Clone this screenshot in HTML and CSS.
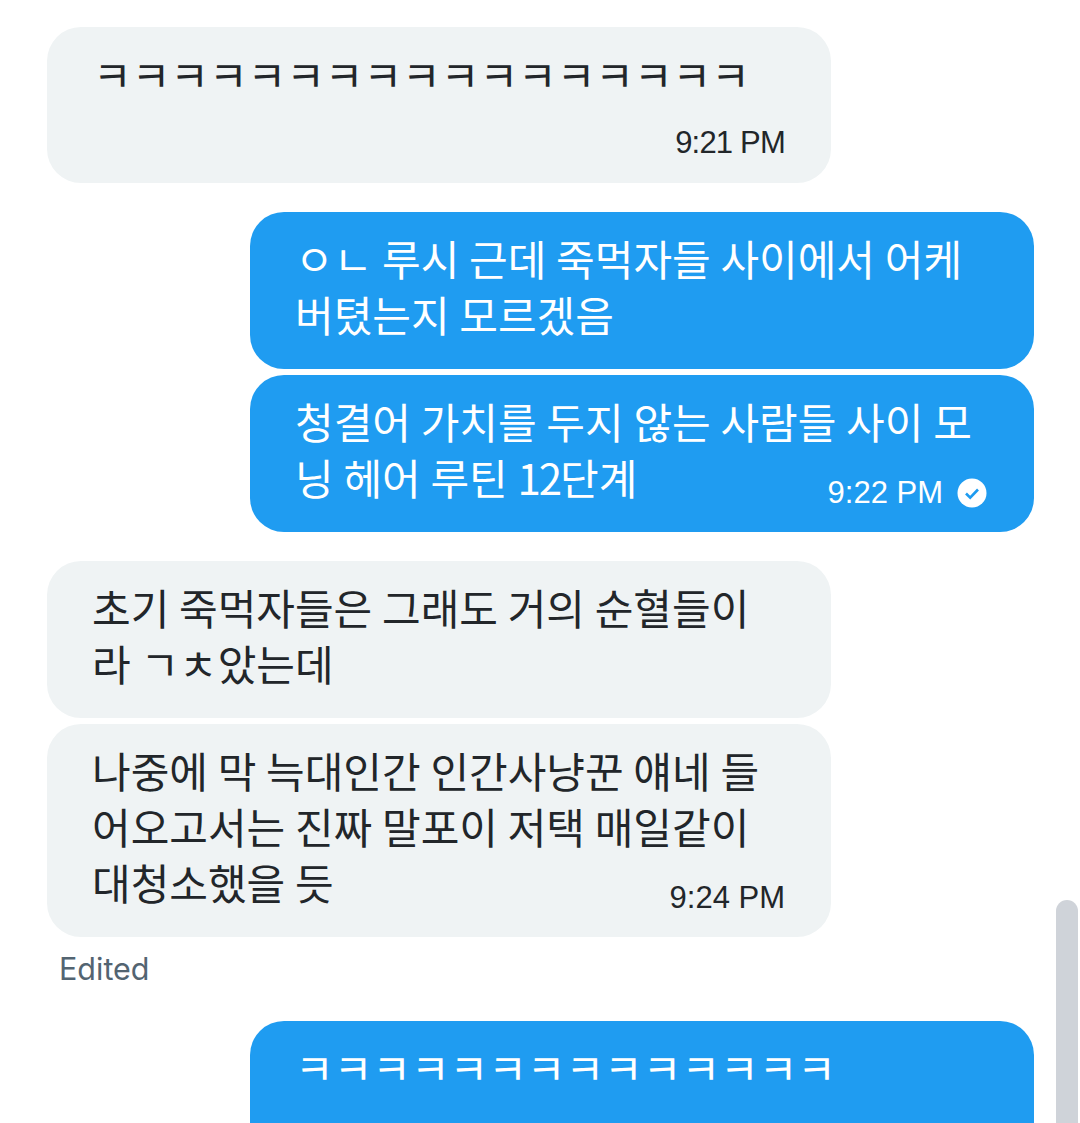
FILE: index.html
```html
<!DOCTYPE html>
<html lang="ko">
<head>
    <meta charset="UTF-8">
    <meta name="viewport" content="width=device-width, initial-scale=1.0">
    <title>Messages</title>
    <link rel="stylesheet" href="styles.css">
</head>
<body>
    <div class="chat">
        <div class="group">
            <div class="msg them first-msg">
                <p>ㅋㅋㅋㅋㅋㅋㅋㅋㅋㅋㅋㅋㅋㅋㅋㅋㅋ</p>
                <div class="time-row"><span class="time short">9:21 PM</span></div>
            </div>
        </div>

        <div class="group">
            <div class="msg me">
                <p>ㅇㄴ 루시 근데 죽먹자들 사이에서 어케 버텼는지 모르겠음</p>
            </div>
            <div class="msg me">
                <p>청결어 가치를 두지 않는 사람들 사이 모닝 헤어 루틴 <span class="num">12</span>단계</p>
                <div class="time-over">
                    <span class="time">9:22 PM</span>
                    <svg class="check" viewBox="0 0 30 30" width="30" height="30">
                        <circle cx="15" cy="15" r="14.5" fill="#fff"/>
                        <path d="M9 15.5l4.2 4.2L21 11.5" fill="none" stroke="#1d9bf0" stroke-width="2.6"/>
                    </svg>
                </div>
            </div>
        </div>

        <div class="group">
            <div class="msg them">
                <p>초기 죽먹자들은 그래도 거의 순혈들이라 ㄱㅊ았는데</p>
            </div>
            <div class="msg them">
                <p>나중에 막 늑대인간 인간사냥꾼 얘네 들어오고서는 진짜 말포이 저택 매일같이 대청소했을 듯</p>
                <div class="time-over"><span class="time">9:24 PM</span></div>
            </div>
            <div class="edited">Edited</div>
        </div>

        <div class="group">
            <div class="msg me last-msg">
                <p>ㅋㅋㅋㅋㅋㅋㅋㅋㅋㅋㅋㅋㅋㅋ</p>
            </div>
        </div>
    </div>
    <div class="scrollbar"></div>
</body>
</html>
```
FILE: styles.css
```css
html, body {
    height: 100%;
}

body {
    margin: 0;
    background-color: white;
    color: #22262a;
    font-family: "Noto Sans CJK KR", "Liberation Sans", sans-serif;
    overflow: hidden;
}

.chat {
    display: flex;
    flex-direction: column;
    gap: 29px;
    padding: 27px 46px 0 47px;
}

.group {
    display: flex;
    flex-direction: column;
    gap: 6px;
}

.msg {
    position: relative;
    box-sizing: border-box;
    width: 784px;
    padding: 18px 46px 27px 45px;
    border-radius: 34px;
    font-size: 42px;
    line-height: 56px;
    word-spacing: -2px;
}

.msg p {
    margin: 0;
}

.num {
    letter-spacing: -2px;
}

.them {
    background-color: #eff3f4;
}

.me {
    align-self: flex-end;
    background-color: #1f9cf1;
    color: white;
}

.first-msg {
    padding: 19px 46px 18px;
}

/* cut off by the bottom of the window */
.last-msg {
    height: 102px;
    border-radius: 34px 34px 0 0;
    padding-bottom: 0;
}

.time-row {
    display: flex;
    justify-content: flex-end;
    margin-top: 19px;
    line-height: 44px;
}

.time {
    font-family: "Liberation Sans", sans-serif;
    font-size: 31px;
    word-spacing: 0;
}

.short {
    letter-spacing: -0.8px;
}

.time-over {
    position: absolute;
    right: 46px;
    bottom: 17px;
    display: flex;
    align-items: center;
    gap: 14px;
    line-height: 44px;
}

.check {
    margin-right: 1px;
}

.edited {
    margin: 4px 0 1px 12px;
    color: #536471;
    font-family: "Inter", sans-serif;
    font-size: 30.5px;
    line-height: 44px;
}

.scrollbar {
    position: absolute;
    top: 900px;
    right: 2px;
    width: 22px;
    height: 223px;
    border-radius: 11px 11px 0 0;
    background-color: #cfd3d9;
}
```
